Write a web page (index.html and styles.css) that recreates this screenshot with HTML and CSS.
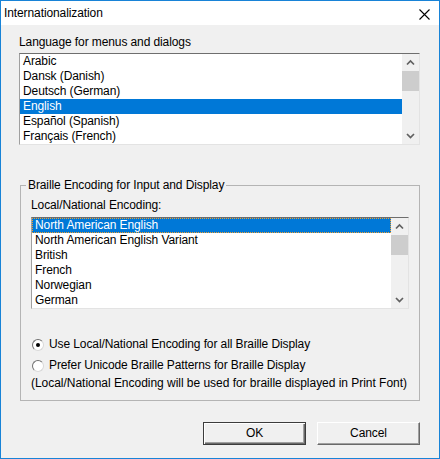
FILE: index.html
```html
<!DOCTYPE html>
<html>
<head>
<meta charset="utf-8">
<link rel="stylesheet" href="styles.css">
</head>
<body>
<div class="window">
  <div class="titlebar">
    <span class="title">Internationalization</span>
    <svg class="close" width="11" height="11" viewBox="0 0 11 11"><path d="M0.5 0.5 L10.5 10.5 M10.5 0.5 L0.5 10.5" stroke="#000" stroke-width="1.1" fill="none"/></svg>
  </div>
  <div class="client">
    <div class="label top-label">Language for menus and dialogs</div>
    <div class="listbox list1">
      <div class="items">
        <div class="item">Arabic</div>
        <div class="item">Dansk (Danish)</div>
        <div class="item">Deutsch (German)</div>
        <div class="item sel">English</div>
        <div class="item">Español (Spanish)</div>
        <div class="item">Français (French)</div>
      </div>
      <div class="scrollbar">
        <svg class="arrow" width="17" height="17" viewBox="0 0 17 17"><polyline points="5,10.5 8.5,7 12,10.5" fill="none" stroke="#606060" stroke-width="1.7"/></svg>
        <div class="track"><div class="thumb"></div></div>
        <svg class="arrow" width="17" height="17" viewBox="0 0 17 17"><polyline points="5,7 8.5,10.5 12,7" fill="none" stroke="#606060" stroke-width="1.7"/></svg>
      </div>
    </div>
    <fieldset class="group">
      <legend>Braille Encoding for Input and Display</legend>
      <div class="group-body">
        <div class="label">Local/National Encoding:</div>
        <div class="listbox list2">
          <div class="items">
            <div class="item sel focus">North American English</div>
            <div class="item">North American English Variant</div>
            <div class="item">British</div>
            <div class="item">French</div>
            <div class="item">Norwegian</div>
            <div class="item">German</div>
          </div>
          <div class="scrollbar">
            <svg class="arrow" width="17" height="17" viewBox="0 0 17 17"><polyline points="5,10.5 8.5,7 12,10.5" fill="none" stroke="#606060" stroke-width="1.7"/></svg>
            <div class="track"><div class="thumb"></div></div>
            <svg class="arrow" width="17" height="17" viewBox="0 0 17 17"><polyline points="5,7 8.5,10.5 12,7" fill="none" stroke="#606060" stroke-width="1.7"/></svg>
          </div>
        </div>
        <div class="radio first"><span class="circle checked"></span><span>Use Local/National Encoding for all Braille Display</span></div>
        <div class="radio second"><span class="circle"></span><span>Prefer Unicode Braille Patterns for Braille Display</span></div>
        <div class="note">(Local/National Encoding will be used for braille displayed in Print Font)</div>
      </div>
    </fieldset>
    <div class="buttons">
      <div class="btn default">OK</div>
      <div class="btn">Cancel</div>
    </div>
  </div>
</div>
</body>
</html>
```
FILE: styles.css
```css
html, body {
  margin: 0;
  padding: 0;
}
body {
  font-family: "Liberation Sans", Arial, sans-serif;
  font-size: 12px;
  line-height: 15px;
  letter-spacing: -0.1px;
  color: #000;
  background: #fff;
}
.window {
  width: 440px;
  height: 459px;
  box-sizing: border-box;
  border: 1px solid #1883d7;
  display: flex;
  flex-direction: column;
}
.titlebar {
  height: 24px;
  background: #fff;
  display: flex;
  align-items: center;
  justify-content: space-between;
  padding: 0 9px 0 3px;
}
.title {
  font-size: 12px;
}
.close {
  display: block;
  margin-top: 2px;
}
.client {
  flex: 1;
  background: #f0f0f0;
  padding: 0 19px 0 18px;
  display: flex;
  flex-direction: column;
}
.label {
  height: 15px;
  white-space: nowrap;
}
.top-label {
  margin-top: 10px;
  margin-bottom: 3px;
}
.listbox {
  display: flex;
  background: #fff;
  border: 1px solid;
  border-color: #6e6e6e #e3e3e3 #e3e3e3 #a0a0a0;
  height: 90px;
}
.items {
  flex: 1;
}
.item {
  height: 15px;
  padding-left: 3px;
  white-space: nowrap;
  box-sizing: border-box;
}
.item.sel {
  background: #0078d7;
  color: #fff;
}
.item.focus {
  outline: 1px dotted #f0a030;
  outline-offset: -1px;
}
.scrollbar {
  width: 17px;
  background: #f0f0f0;
  display: flex;
  flex-direction: column;
}
.arrow {
  display: block;
}
.track {
  flex: 1;
}
.thumb {
  height: 20px;
  background: #cdcdcd;
}
.group {
  margin: 33px 0 0 1px;
  padding: 0;
  border: 1px solid #b4b4b4;
  min-width: 0;
}
.group legend {
  margin-left: 5px;
  padding: 0 2px;
  height: 15px;
  line-height: 15px;
}
.group-body {
  padding: 5px 10px 9px 10px;
}
.list2 {
  margin-top: 4px;
}
.radio {
  display: flex;
  align-items: center;
  height: 15px;
  white-space: nowrap;
}
.radio.first {
  margin-top: 28px;
}
.radio.second {
  margin-top: 6px;
}
.circle {
  width: 10px;
  height: 10px;
  border-radius: 50%;
  border: 1px solid;
  border-color: #707070 #d8d8d8 #d8d8d8 #707070;
  background: #fff;
  margin: 0 5px 0 1px;
  display: flex;
  align-items: center;
  justify-content: center;
  flex: none;
}
.circle.checked::after {
  content: "";
  width: 4px;
  height: 4px;
  border-radius: 50%;
  background: #000;
}
.note {
  margin-top: 3px;
  height: 15px;
  white-space: nowrap;
  letter-spacing: -0.03px;
}
.buttons {
  display: flex;
  justify-content: flex-end;
  gap: 11px;
  margin-top: 21px;
}
.btn {
  width: 103px;
  height: 23px;
  box-sizing: border-box;
  background: #f0f0f0;
  border: 1px solid;
  border-color: #fff #696969 #696969 #fff;
  box-shadow: inset -1px -1px 0 #a0a0a0;
  display: flex;
  align-items: center;
  justify-content: center;
}
.btn.default {
  border: 1px solid #3c3c3c;
  box-shadow: inset 1px 1px 0 #fff, inset -1px -1px 0 #696969, inset -2px -2px 0 #a0a0a0;
}
```
